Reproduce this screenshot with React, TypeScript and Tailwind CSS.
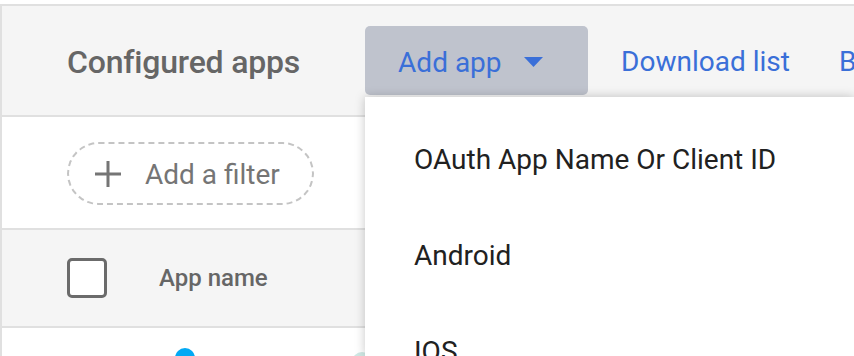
export default function App() {
  return (
    <div className="relative h-[356px] w-[854px] overflow-hidden bg-white font-['Roboto',sans-serif]">
      <div className="mt-1 h-full border-l-2 border-t-2 border-[#e0e0e0]">
        {/* header */}
        <div className="flex h-[111px] items-center overflow-hidden whitespace-nowrap border-b-2 border-[#e0e0e0] bg-[#f5f5f5] pl-[65px]">
          <h1 className="mt-[3px] shrink-0 text-[32px] font-medium tracking-[-0.2px] text-[#666666]">Configured apps</h1>
          <button className="ml-[65px] flex h-[69px] w-[223px] shrink-0 items-center rounded-[5px] bg-[#bfc3cd] pl-[33px] pt-[4px] text-[28px] text-[#3a6fd8]">
            Add app
            <svg width="19" height="10" viewBox="0 0 19 10" className="ml-[22px] mb-[2px]">
              <path d="M0 0h19L9.5 10z" fill="#3a6fd8" />
            </svg>
          </button>
          <a className="ml-[33px] mt-[3px] shrink-0 text-[28px] text-[#3a6fd8]">Download list</a>
          <a className="ml-[49px] mt-[3px] shrink-0 text-[28px] text-[#3a6fd8]">Bulk update</a>
        </div>

        {/* filter row */}
        <div className="flex h-[113px] items-center border-b-2 border-[#e0e0e0] pl-[65px] pt-[2px]">
          <div className="flex h-[63px] items-center rounded-full border-2 border-dashed border-[#c4c4c4] pl-[25px] pr-[32px]">
            <svg width="28" height="28" viewBox="0 0 28 28">
              <path d="M14 1v26M1 14h26" stroke="#757575" strokeWidth="3" />
            </svg>
            <span className="ml-[23px] mt-[2px] text-[28px] text-[#757575]">Add a filter</span>
          </div>
        </div>

        {/* table header */}
        <div className="flex h-[98px] items-center border-b-2 border-[#e0e0e0] bg-[#f5f5f5] pl-[65px]">
          <div className="h-[40px] w-[40px] rounded-[5px] border-[3px] border-[#6b6b6b] bg-white" />
          <span className="ml-[52px] text-[24px] font-medium text-[#666666]">App name</span>
        </div>

        {/* first row */}
        <div className="relative h-[40px]">
          <div className="absolute left-[173px] top-[20px] h-[20px] w-[20px] rounded-full bg-[#03a9f4]" />
          <div className="absolute left-[350px] top-[24px] h-[20px] w-[20px] rounded-full bg-[#cfe8e4]" />
        </div>
      </div>

      {/* dropdown menu */}
      <div className="absolute bottom-0 left-[365px] right-0 top-[97px] bg-white pt-[15px] shadow-[0_0_10px_rgba(0,0,0,0.22)]">
        {["OAuth App Name Or Client ID", "Android", "IOS"].map((item) => (
          <div key={item} className="flex h-[96px] items-center pl-[49px] text-[28px] text-[#212121]">
            {item}
          </div>
        ))}
      </div>
    </div>
  );
}
